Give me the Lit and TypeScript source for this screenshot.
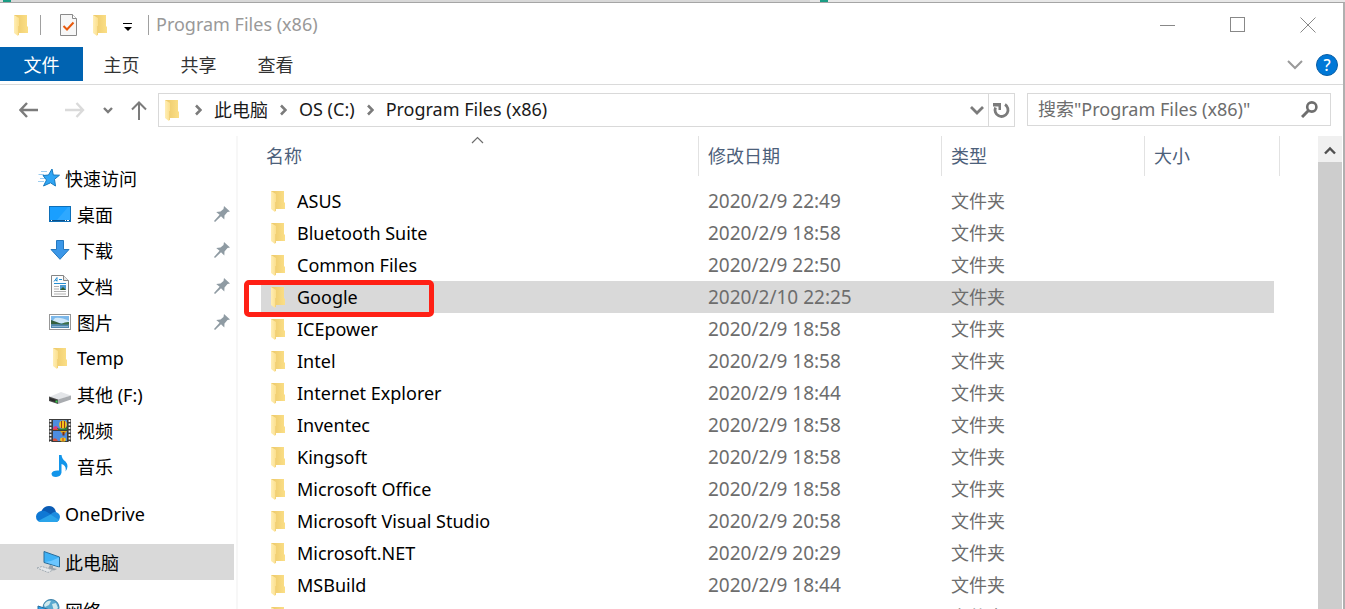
import { LitElement, html, css, svg, nothing } from "lit";
import { customElement, property, state } from "lit/decorators.js";
import { classMap } from "lit/directives/class-map.js";

const icons: Record<string, unknown> = {
  folder: html`<svg width="14" height="21" viewBox="0 0 14 21" aria-hidden="true">
    <defs>
      <linearGradient id="back" x1="0" x2="1"><stop offset="0" stop-color="#ecc869" /><stop offset="1" stop-color="#fbdf87" /></linearGradient>
      <linearGradient id="flap" x1="0" x2="1"><stop offset="0" stop-color="#ffeeb5" /><stop offset="1" stop-color="#fbdf8d" /></linearGradient>
    </defs>
    <path d="M0 0H13V11L14 12V18H4L0 17Z" fill="url(#back)" />
    <path d="M0 0L5 3V19L4 21L0 18Z" fill="url(#flap)" />
    <path d="M4.500 20V11" stroke="#f3d27a" fill="none" />
  </svg>`,
  star: html`<svg width="24" height="20" viewBox="0 0 24 20" aria-hidden="true">
    <path d="M5 3.500H11M2.500 6.500H8M4 10.500H9M2 13.500H8" stroke="#9ccdf0" stroke-width="1" />
    <path d="M16 1L17.300 7L23.500 7.200L18.500 11.300L19.500 18L14.500 14.800L7.500 18L10.500 12L7 7.500L12.500 7Z" fill="#2fa5f4" stroke="#1679be" stroke-width="1" />
  </svg>`,
  desktop: html`<svg width="22" height="16" viewBox="0 0 22 16" aria-hidden="true">
    <rect x=".5" y=".5" width="21" height="15" fill="#1a9fff" stroke="#0e6fb8" />
    <path d="M8 14L19 1H21V14Z" fill="#2ea8ff" />
    <path d="M1 14.500H21" stroke="#0b4f88" />
    <path d="M2 14.500H3M16 14.500H17M18 14.500H20" stroke="#fff" />
  </svg>`,
  download: html`<svg width="20" height="20" viewBox="0 0 20 20" aria-hidden="true">
    <path d="M6.500 .5H13.500V9.500H19L10 19.300L1 9.500H6.500Z" fill="#3b97e8" stroke="#2478bf" />
  </svg>`,
  doc: html`<svg width="18" height="22" viewBox="0 0 18 22" aria-hidden="true">
    <path d="M.5 .5H12.500L17.500 5.500V21.500H.5Z" fill="#fdfdfd" stroke="#858585" />
    <path d="M12.500 .5V5.500H17.500" fill="#e8e8e8" stroke="#858585" />
    <path d="M3 6.500L6 2.500V6.500M4.500 5.500H6M8 4.500H11M3 8.500H15" stroke="#268fd2" fill="none" />
    <path d="M3 11.500H8M3 14H8M3 16.500H15M3 19H15" stroke="#b0b0b0" />
    <rect x="9" y="10" width="6" height="5" fill="#4f9bd1" /><path d="M9 15L12 12L15 15Z" fill="#345e2e" />
  </svg>`,
  picture: html`<svg width="22" height="16" viewBox="0 0 22 16" aria-hidden="true">
    <rect x=".5" y=".5" width="21" height="15" fill="#fff" stroke="#979797" />
    <rect x="2" y="2" width="18" height="12" fill="#7cb8ea" />
    <path d="M6 4Q12 3 20 7V9H2Z" fill="#cfe7f8" />
    <path d="M2 6Q8 8 14 10.500H2Z" fill="#35603d" />
    <path d="M12 10Q17 7.500 20 8V11H9Z" fill="#3f7048" />
    <rect x="2" y="10.500" width="18" height="3.500" fill="#5187ad" />
    <path d="M3 12.500H19" stroke="#8db7d0" />
  </svg>`,
  drive: html`<svg width="22" height="20" viewBox="0 0 22 20" aria-hidden="true">
    <path d="M0 13L12 8L22 11.500L9 16Z" fill="#e3e5e8" />
    <path d="M9 15.500L22 11.500V15.500L9 20Z" fill="#a9acb0" />
    <path d="M0 12.500L9 15.500V20L0 17Z" fill="#4a4a4a" />
    <path d="M1 14L8 16.300V18.500L1 16.200Z" fill="#2a2a2a" />
    <rect x="6.500" y="16.500" width="2" height="2" fill="#38d04b" />
  </svg>`,
  video: html`<svg width="22" height="23" viewBox="0 0 22 23" aria-hidden="true">
    <rect width="22" height="23" fill="#3c3c3c" />
    <path d="M1.500 1V23M20.500 1V23" stroke="#f0f0f0" stroke-width="1.800" stroke-dasharray="2 1.500" />
    <rect x="4" y="1" width="14" height="10" fill="#4d8de0" />
    <rect x="4" y="12" width="14" height="10" fill="#4d8de0" />
    <path d="M4 9Q6.500 5 9.500 9V11H4Z" fill="#d63b82" />
    <path d="M8 9Q14 11 18 7V11H8Z" fill="#2b7a37" />
    <ellipse cx="14" cy="5.500" rx="3.800" ry="4" fill="#f2c21c" />
    <path d="M12.500 2V9M15.500 2V9" stroke="#9b3a1c" stroke-width="1" />
    <path d="M4 10.500H9" stroke="#e2452a" />
    <path d="M11 12H18L15.500 15H13.500Z" fill="#e3a71a" />
    <path d="M13.500 13H15.500V16.500H13.500Z" fill="#7d2a16" />
    <ellipse cx="14" cy="20.500" rx="3" ry="2" fill="#f0c21e" /><path d="M14 19V22" stroke="#d4301c" />
    <path d="M4 22V20Q7 18 9 22Z" fill="#d6503b" />
  </svg>`,
  music: html`<svg width="18" height="22" viewBox="0 0 18 22" aria-hidden="true">
    <path d="M8 0H10.500Q11 4 14.500 6.500Q18.500 11 14.500 16.500Q15.800 10.500 10.500 9V17.500Q10 21.500 5 22Q.5 22 .5 18.500Q1.500 15 8 15.500Z" fill="#1295ea" />
  </svg>`,
  onedrive: html`<svg width="24" height="16" viewBox="0 0 24 16" aria-hidden="true">
    <path d="M5 6Q7.500 0 13 0Q18.500 0 20 6L14 9Z" fill="#0a5cb5" />
    <path d="M5 5Q8 4 11 6L16 9L6 16H4.500Q0 15 0 10.500Q.5 6 5 5Z" fill="#0f78d4" />
    <path d="M15 8Q17 5.500 20 6Q24 7.500 24 11Q24 14 21 16H12Z" fill="#1c8ce0" />
    <path d="M2 15L14.500 8.500L23.200 14Q22 16 19.500 16H5Q3 16 2 15Z" fill="#2aa4ea" />
  </svg>`,
  pc: html`<svg width="24" height="22" viewBox="0 0 24 22" aria-hidden="true">
    <path d="M8 .5L23.500 6V16L8 11.500Z" fill="#3fb1f5" stroke="#2b6c99" />
    <path d="M15 10L23 6.500V15.500L9 11Z" fill="#6cc6ff" />
    <path d="M14 14L17 15V17L21 18L18 19.500L12 17.500Z" fill="#9aa4ad" />
    <path d="M1 17L6 15.500L17 19L12 21.500Z" fill="#e4e7ea" stroke="#a2abb2" stroke-dasharray="2 1" />
  </svg>`,
  network: html`<svg width="24" height="22" viewBox="0 0 24 22" aria-hidden="true">
    <circle cx="15" cy="8.500" r="8" fill="#5aa9cf" stroke="#3c81a8" />
    <path d="M8 6Q11 1 15 2L13 6L9 8ZM16 5L20 4L22 9L18 12Z" fill="#cfe9ee" />
    <path d="M2 7L14 11V20L2 16Z" fill="#2f9fe8" stroke="#246c9e" />
  </svg>`,
  pin: html`<svg width="16" height="16" viewBox="0 0 16 16" aria-hidden="true">
    <path d="M10 0L16 5.500L13.500 6L10.500 9.500L10.300 13.500L7 10.300L1 16L0 15L5.600 8.800L2.200 6L6.500 5.500L9.500 3Z" fill="#8f9ba3" />
  </svg>`,
};

const crumbArrow = svg`<svg width="7" height="12" viewBox="0 0 7 12" aria-hidden="true"><path d="M1 1.500L5.500 6L1 10.500" fill="none" stroke="#7b7b7b" stroke-width="2.600" /></svg>`;

interface Place { name: string; icon: string; pinned?: boolean; }

const quickAccess: Place[] = [
  { name: "桌面", icon: "desktop", pinned: true },
  { name: "下载", icon: "download", pinned: true },
  { name: "文档", icon: "doc", pinned: true },
  { name: "图片", icon: "picture", pinned: true },
  { name: "Temp", icon: "folder" },
  { name: "其他 (F:)", icon: "drive" },
  { name: "视频", icon: "video" },
  { name: "音乐", icon: "music" },
];

const files: [string, string][] = [
  ["ASUS", "2020/2/9 22:49"],
  ["Bluetooth Suite", "2020/2/9 18:58"],
  ["Common Files", "2020/2/9 22:50"],
  ["Google", "2020/2/10 22:25"],
  ["ICEpower", "2020/2/9 18:58"],
  ["Intel", "2020/2/9 18:58"],
  ["Internet Explorer", "2020/2/9 18:44"],
  ["Inventec", "2020/2/9 18:58"],
  ["Kingsoft", "2020/2/9 18:58"],
  ["Microsoft Office", "2020/2/9 18:58"],
  ["Microsoft Visual Studio", "2020/2/9 20:58"],
  ["Microsoft.NET", "2020/2/9 20:29"],
  ["MSBuild", "2020/2/9 18:44"],
  ["", ""],
];

const base = css`
  *, *::before, *::after { box-sizing: border-box; }
  svg { display: block; flex: none; }
  button, input { font: inherit; color: inherit; background: none; border: 0; padding: 0; margin: 0; }
  a { color: inherit; text-decoration: none; }
`;

@customElement("title-bar")
export class TitleBar extends LitElement {
  static styles = [base, css`
    :host { display: flex; height: 44px; padding-left: 14px; color: #999; }
    .quick { display: flex; align-items: center; flex: 1; }
    .rule { width: 1px; height: 20px; background: #a0a0a0; }
    .rule.first { margin: 0 19px 0 12px; }
    .rule.last { margin: 0 7px 0 15px; }
    .quick button { display: block; margin-right: 16px; }
    .quick button.more { margin: 4px 0 0; }
    .title { font-size: 18px; font-weight: 400; margin: 0; padding-bottom: 2px; white-space: nowrap; }
    .control { width: 70px; display: grid; place-items: center; }
  `];
  render() {
    return html`
      <div class="quick">
        ${icons.folder}
        <span class="rule first"></span>
        <button aria-label="属性">
          <svg width="17" height="22" viewBox="0 0 17 22">
            <path d="M.5 .5H12.500L16.500 4.500V21.500H.5Z" fill="#f7f7f7" stroke="#8a8a8a" />
            <path d="M12.500 .5V4.500H16.500" fill="#fff" stroke="#8a8a8a" />
            <path d="M3.500 12L7 15.500L13.500 8.500" fill="none" stroke="#e8590c" stroke-width="2" />
          </svg>
        </button>
        <button aria-label="新建文件夹">${icons.folder}</button>
        <button class="more" aria-label="自定义快速访问工具栏">
          <svg width="10" height="8" viewBox="0 0 10 8"><path d="M0 0H9V1H0ZM1 4H9L5 8Z" fill="#000" /></svg>
        </button>
        <span class="rule last"></span>
        <h1 class="title">Program Files (x86)</h1>
      </div>
      <button class="control" aria-label="最小化">
        <svg width="16" height="16" viewBox="0 0 16 16"><path d="M0 8.500H15" stroke="#888" /></svg>
      </button>
      <button class="control" aria-label="最大化">
        <svg width="16" height="16" viewBox="0 0 16 16"><rect x=".5" y=".5" width="14" height="14" fill="none" stroke="#888" /></svg>
      </button>
      <button class="control" aria-label="关闭">
        <svg width="16" height="16" viewBox="0 0 16 16"><path d="M.5 .5L15.500 15.500M15.500 .5L.5 15.500" stroke="#888" /></svg>
      </button>`;
  }
}

@customElement("ribbon-tabs")
export class RibbonTabs extends LitElement {
  static styles = [base, css`
    :host { display: flex; height: 38px; border-bottom: 1px solid #dadada; color: #333; }
    .tab { width: 77px; height: 34px; font-size: 18px; line-height: 36px; text-align: center; }
    .tab.file { width: 83px; border-right: 0; background: #0063b1; color: #fff; }
    .tools { display: flex; align-items: center; gap: 13px; margin-left: auto; padding-right: 5px; height: 36px; }
    .help { width: 22px; height: 22px; border-radius: 50%; background: #0078d7; border: 1px solid #0a5ea5; color: #fff; font-size: 16px; font-weight: 500; line-height: 20px; }
  `];
  render() {
    return html`
      <button class="tab file">文件</button>
      ${["主页", "共享", "查看"].map((t) => html`<button class="tab">${t}</button>`)}
      <div class="tools">
        <button aria-label="展开功能区">
          <svg width="16" height="10" viewBox="0 0 16 10"><path d="M1 1L8 8L15 1" fill="none" stroke="#9a9a9a" stroke-width="2" /></svg>
        </button>
        <button class="help" aria-label="帮助">?</button>
      </div>`;
  }
}

@customElement("address-bar")
export class AddressBar extends LitElement {
  static styles = [base, css`
    :host { display: flex; height: 51px; padding: 8px 12px 0 19px; color: #1a1a1a; font-size: 18px; }
    .nav { display: flex; align-items: center; height: 34px; width: 139px; }
    .forward { margin-left: 26px; }
    .recent { margin-left: 18px; }
    .up { margin-left: 18px; }
    .path { display: flex; align-items: center; flex: 1; height: 34px; border: 1px solid #d9d9d9; padding-left: 6px; white-space: nowrap; }
    .crumbs { display: flex; align-items: center; flex: 1; gap: 12px; margin-left: 16px; }
    .crumbs a { padding-bottom: 2px; }
    .refresh { width: 26px; height: 32px; margin-left: 4px; border-left: 1px solid #d9d9d9; display: grid; place-items: center; }
    .search { display: flex; align-items: center; width: 304px; height: 33px; margin-left: 12px; border: 1px solid #d9d9d9; padding: 0 12px 0 10px; }
    .search input { flex: 1; min-width: 0; height: 31px; padding-bottom: 2px; outline: 0; }
    .search input::placeholder { color: #6d6d6d; opacity: 1; }
  `];
  render() {
    return html`
      <nav class="nav">
        <button aria-label="后退">
          <svg width="20" height="16" viewBox="0 0 20 16"><path d="M19 8H1.500M8 1L1.500 8L8 15" fill="none" stroke="#7b7b7b" stroke-width="2.400" /></svg>
        </button>
        <button class="forward" aria-label="前进" disabled>
          <svg width="20" height="16" viewBox="0 0 20 16"><path d="M0 8H18M11.500 1L18 8L11.500 15" fill="none" stroke="#dadada" stroke-width="2.400" /></svg>
        </button>
        <button class="recent" aria-label="最近浏览的位置">
          <svg width="10" height="7" viewBox="0 0 10 7"><path d="M1 1L5 5L9 1" fill="none" stroke="#7b7b7b" stroke-width="2.400" /></svg>
        </button>
        <button class="up" aria-label="向上">
          <svg width="16" height="19" viewBox="0 0 16 19"><path d="M8 19V1.500M1 8.500L8 1.500L15 8.500" fill="none" stroke="#7b7b7b" stroke-width="2" /></svg>
        </button>
      </nav>
      <div class="path">
        ${icons.folder}
        <div class="crumbs">
          ${["此电脑", "OS (C:)", "Program Files (x86)"].map((c) => html`${crumbArrow}<a href="#">${c}</a>`)}
        </div>
        <button aria-label="以前的位置">
          <svg width="14" height="9" viewBox="0 0 14 9"><path d="M1 1L7 7L13 1" fill="none" stroke="#7b7b7b" stroke-width="2.800" /></svg>
        </button>
        <button class="refresh" aria-label="刷新">
          <svg width="17" height="17" viewBox="0 0 17 17">
            <path d="M12 2.500A6.500 6.500 0 1 1 2.500 5.500" fill="none" stroke="#7b7b7b" stroke-width="2.800" />
            <path d="M0 1H8V8H5.500V4.500H0Z" fill="#7b7b7b" />
          </svg>
        </button>
      </div>
      <label class="search">
        <input type="text" aria-label="搜索" placeholder='搜索"Program Files (x86)"' />
        <svg width="17" height="17" viewBox="0 0 17 17"><circle cx="10.800" cy="6" r="4.600" fill="none" stroke="#6e6e6e" stroke-width="2.600" /><path d="M7.500 9.500L1 16" stroke="#6e6e6e" stroke-width="3" /></svg>
      </label>`;
  }
}

@customElement("nav-tree")
export class NavTree extends LitElement {
  static styles = [base, css`
    :host { display: flex; flex-direction: column; flex: none; gap: 12px; width: 238px; padding: 24px 2px 0 0; border-right: 2px solid #f7f7f7; overflow: hidden; color: #000; font-size: 18px; }
    .item { display: flex; align-items: center; gap: 5px; height: 36px; padding: 0 4px 0 36px; white-space: nowrap; }
    .item.child { padding-left: 48px; }
    .item.selected { background: #d9d9d9; }
    .icon { width: 24px; display: grid; place-items: center; }
    .pin { margin-left: auto; }
  `];
  private item(p: Place, child = false, selected = false) {
    return html`<a href="#" class=${classMap({ item: true, child, selected })}>
      <span class="icon">${icons[p.icon]}</span><span>${p.name}</span>
      ${p.pinned ? html`<span class="pin">${icons.pin}</span>` : nothing}
    </a>`;
  }
  render() {
    return html`
      <div>${this.item({ name: "快速访问", icon: "star" })}${quickAccess.map((p) => this.item(p, true))}</div>
      <div>${this.item({ name: "OneDrive", icon: "onedrive" })}</div>
      <div>${this.item({ name: "此电脑", icon: "pc" }, false, true)}</div>
      <div>${this.item({ name: "网络", icon: "network" })}</div>`;
  }
}

@customElement("file-list")
export class FileList extends LitElement {
  @property() marked = "Google";
  @state() private selected = "Google";
  static styles = [base, css`
    :host { display: block; flex: 1; min-width: 0; padding-left: 23px; overflow: hidden; font-size: 18px; }
    table { table-layout: fixed; width: 1019px; border-spacing: 0; }
    .name { width: 438px; }
    .date { width: 243px; }
    .type { width: 203px; }
    th { padding: 0 0 9px; font-weight: 400; }
    th button { position: relative; display: block; width: 100%; height: 40px; padding: 0 0 2px 9px; border-right: 1px solid #e2e2e2; color: #4c607a; text-align: left; }
    th.name button { padding-left: 5px; }
    .sort { position: absolute; left: 210px; top: 0; }
    td { height: 32px; padding: 0 0 0 9px; color: #6d6d6d; line-height: 32px; white-space: nowrap; }
    td.name { position: relative; padding-left: 10px; color: #000; }
    td.date { font-size: 19px; }
    td.size { border-right: 6px solid transparent; background-clip: padding-box; }
    .entry { display: flex; align-items: center; gap: 12px; height: 32px; }
    .selected td { background-color: #d9d9d9; }
    .mark { position: absolute; left: -17px; top: -1px; width: 190px; height: 37px; border: 5px solid #ff2015; border-radius: 5px; pointer-events: none; z-index: 1; }
  `];
  render() {
    return html`<table>
      <thead><tr>
        <th class="name"><button>名称<svg class="sort" width="13" height="8" viewBox="0 0 13 8"><path d="M1 7L6.500 1.500L12 7" fill="none" stroke="#6d6d6d" stroke-width="1.200" /></svg></button></th>
        <th class="date"><button>修改日期</button></th>
        <th class="type"><button>类型</button></th>
        <th class="size"><button>大小</button></th>
      </tr></thead>
      <tbody>
        ${files.map(([name, date]) => html`<tr class=${classMap({ selected: name === this.selected })} @click=${() => (this.selected = name)}>
          <td class="name"><div class="entry">${icons.folder}<span>${name}</span></div>${name === this.marked ? html`<span class="mark"></span>` : nothing}</td>
          <td class="date">${date}</td><td>文件夹</td><td class="size"></td>
        </tr>`)}
      </tbody>
    </table>`;
  }
}

@customElement("app-root")
export class AppRoot extends LitElement {
  static styles = [base, css`
    :host { display: flex; flex-direction: column; height: 100vh; overflow: hidden; background: #fff; font-family: "Noto Sans", "Noto Sans CJK SC", sans-serif; }
    .behind { flex: none; height: 2px; background: linear-gradient(90deg, #ddd 3px, #1a9c84 3px 11px, #d8d8d8 11px 810px, #e6e6e6 810px 820px, #1a9c84 820px 828px, #e8e8e8 828px); }
    .window { display: flex; flex-direction: column; flex: 1; min-height: 0; border-top: 1px solid #a5a5a5; border-right: 2px solid #b0b0b0; }
    .window > * { flex: none; }
    .window > .body { display: flex; flex: 1; min-height: 0; }
    .scroll { flex: none; display: flex; flex-direction: column; width: 24px; margin-right: 1px; background: #f0f0f0; }
    .scroll button { display: grid; place-items: center; height: 26px; padding-top: 2px; }
    .thumb { flex: 1; background: #cdcdcd; }
  `];
  render() {
    return html`
      <div class="behind"></div>
      <main class="window">
        <title-bar></title-bar>
        <ribbon-tabs></ribbon-tabs>
        <address-bar></address-bar>
        <div class="body">
          <nav-tree></nav-tree>
          <file-list></file-list>
          <div class="scroll">
            <button aria-label="向上滚动"><svg width="12" height="9" viewBox="0 0 12 9"><path d="M1 7.500L6 2.500L11 7.500" fill="none" stroke="#505050" stroke-width="2.400" /></svg></button>
            <div class="thumb"></div>
          </div>
        </div>
      </main>`;
  }
}
